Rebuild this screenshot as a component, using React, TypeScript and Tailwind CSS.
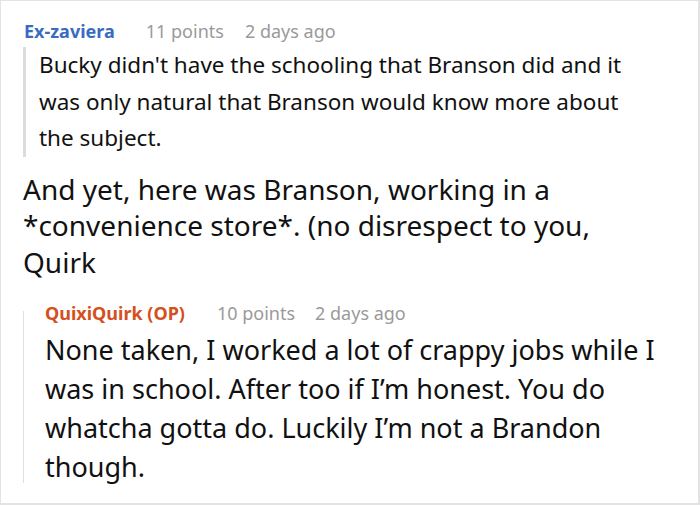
export default function App() {
  return (
    <div className="w-[700px] h-[505px] bg-white border-t border-l border-r-2 border-b-2 border-[#e3e3e3] font-['Noto_Sans',sans-serif] text-[#111] overflow-hidden">
      <div className="pt-[17px] pl-[22px]">
        <div className="flex items-baseline text-[18px] leading-[26px] pl-px">
          <span className="font-bold text-[#3a6bc2]">Ex-zaviera</span>
          <span className="ml-[31px] text-[#9a9a9a]">11 points</span>
          <span className="ml-[21px] text-[#9a9a9a]">2 days ago</span>
        </div>
        <div className="mt-[3px] border-l-[3px] border-[#dcdcdc] pl-[13px] text-[22.5px] leading-[36.5px] w-[620px]">
          Bucky didn't have the schooling that Branson did and it was only natural that Branson would know more about the subject.
        </div>
        <p className="mt-[14px] text-[28px] leading-[36.5px] w-[600px]">
          And yet, here was Branson, working in a *convenience store*. (no disrespect to you, Quirk
        </p>
        <div className="mt-[20px] flex">
          <div className="mt-[11px] mb-[3px] w-px bg-[#e0e0e0]" />
          <div className="pl-[21px]">
            <div className="flex items-baseline text-[18px] leading-[26px]">
              <span className="font-bold text-[#d4501e]">QuixiQuirk (OP)</span>
              <span className="ml-[32px] text-[#9a9a9a]">10 points</span>
              <span className="ml-[20px] text-[#9a9a9a]">2 days ago</span>
            </div>
            <p className="mt-[4px] text-[27px] leading-[39px] w-[640px]">
              None taken, I worked a lot of crappy jobs while I was in school. After too if I’m honest. You do whatcha gotta do. Luckily I’m not a Brandon though.
            </p>
          </div>
        </div>
      </div>
    </div>
  )
}
